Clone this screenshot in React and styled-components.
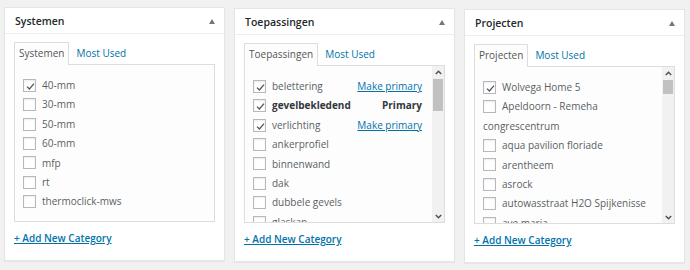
import React from "react";
import styled, { createGlobalStyle } from "styled-components";

const GlobalStyle = createGlobalStyle`
  html, body { margin: 0; padding: 0; background: #f1f1f1; }
  body { font-family: "Open Sans", "Noto Sans", sans-serif; color: #555; }
  * { box-sizing: border-box; }
`;

const Page = styled.div`
  display: flex;
  align-items: flex-start;
  gap: 9px;
  padding: 7px 4px;
  width: 690px;
  height: 270px;
`;

const Panel = styled.section`
  width: 221px;
  margin-top: ${(p) => p.$shift || 0}px;
  background: #fff;
  border: 1px solid #e5e5e5;
  box-shadow: 0 1px 1px rgba(0, 0, 0, 0.04);
`;

const PanelHeader = styled.div`
  height: 26px;
  display: flex;
  align-items: center;
  justify-content: space-between;
  padding: 0 9px 0 10px;
  border-bottom: 1px solid #eee;
`;

const Title = styled.h2`
  margin: 0;
  font-size: 10.5px;
  font-weight: 600;
  color: #23282d;
  line-height: 14px;
`;

const Toggle = styled.span`
  width: 0;
  height: 0;
  border-left: 3.5px solid transparent;
  border-right: 3.5px solid transparent;
  border-bottom: 5px solid #72777c;
  margin-top: 1px;
`;

const PanelBody = styled.div`
  padding: 8px 9px 15px 9px;
`;

const Tabs = styled.div`
  display: flex;
  align-items: flex-end;
  position: relative;
  z-index: 1;
  margin-bottom: -1px;
`;

const Tab = styled.span`
  font-size: 10px;
  line-height: 15px;
  padding: 3px ${(p) => (p.$active ? "4px" : "6px")} 4px;
  color: ${(p) => (p.$active ? "#555" : "#0073aa")};
  background: ${(p) => (p.$active ? "#fdfdfd" : "transparent")};
  border: 1px solid ${(p) => (p.$active ? "#ddd" : "transparent")};
  border-bottom: none;
`;

const TabBox = styled.div`
  height: 158px;
  border: 1px solid #ddd;
  background: #fdfdfd;
  display: flex;
  overflow: hidden;
`;

const List = styled.div`
  flex: 1;
  overflow: hidden;
  padding: 11px 10px 0 8px;
`;

const Row = styled.div`
  font-size: 10px;
  line-height: 19.4px;
  color: #5a5f64;
  font-weight: ${(p) => (p.$bold ? 700 : 400)};
  ${(p) => (p.$bold ? "color: #32373c;" : "")}
`;

const Box = styled.span`
  display: inline-block;
  width: 13px;
  height: 13px;
  border: 1px solid #b4b9be;
  background: #fff;
  vertical-align: middle;
  margin: -2px 6px 0 0;
  box-shadow: inset 0 1px 2px rgba(0, 0, 0, 0.08);
  position: relative;

  svg {
    position: absolute;
    left: 1px;
    top: 1px;
  }
`;

const MakePrimary = styled.a`
  float: right;
  color: #0073aa;
  text-decoration: underline;
  font-weight: 400;
`;

const PrimaryLabel = styled.span`
  float: right;
  font-weight: 700;
  color: #32373c;
`;

const Scrollbar = styled.div`
  width: 12px;
  flex: none;
  background: #f1f1f1;
  display: flex;
  flex-direction: column;
  align-items: center;
`;

const ScrollButton = styled.div`
  height: 12px;
  width: 12px;
  display: flex;
  align-items: center;
  justify-content: center;
`;

const Track = styled.div`
  flex: 1;
  width: 100%;
  padding: 1px 1px 0;
`;

const Thumb = styled.div`
  width: 100%;
  background: #c1c1c1;
`;

const AddLink = styled.a`
  display: block;
  margin-top: 9px;
  font-size: 10px;
  line-height: 14px;
  font-weight: 600;
  color: #0073aa;
  text-decoration: underline;
`;

const Check = () => (
  <svg width="11" height="11" viewBox="0 0 11 11">
    <path d="M2 5.6 L4.4 8 L9 2.6" fill="none" stroke="#555" strokeWidth="1.3" />
  </svg>
);

const Chevron = ({ down }) => (
  <svg width="7" height="5" viewBox="0 0 7 5">
    <path
      d={down ? "M0.8 1 L3.5 3.8 L6.2 1" : "M0.8 4 L3.5 1.2 L6.2 4"}
      fill="none"
      stroke="#505050"
      strokeWidth="1.4"
    />
  </svg>
);

const Item = ({ label, checked, bold, action }) => (
  <Row $bold={bold}>
    {action === "make" && <MakePrimary>Make primary</MakePrimary>}
    {action === "primary" && <PrimaryLabel>Primary</PrimaryLabel>}
    <Box>{checked && <Check />}</Box>
    {label}
  </Row>
);

const FakeScroll = ({ thumb }) => (
  <Scrollbar>
    <ScrollButton>
      <Chevron />
    </ScrollButton>
    <Track>
      <Thumb style={{ height: thumb }} />
    </Track>
    <ScrollButton>
      <Chevron down />
    </ScrollButton>
  </Scrollbar>
);

const CategoryPanel = ({ title, items, thumb, shift }) => (
  <Panel $shift={shift}>
    <PanelHeader>
      <Title>{title}</Title>
      <Toggle />
    </PanelHeader>
    <PanelBody>
      <Tabs>
        <Tab $active>{title}</Tab>
        <Tab>Most Used</Tab>
      </Tabs>
      <TabBox>
        <List>
          {items.map((it) => (
            <Item key={it.label} {...it} />
          ))}
        </List>
        {thumb && <FakeScroll thumb={thumb} />}
      </TabBox>
      <AddLink>+ Add New Category</AddLink>
    </PanelBody>
  </Panel>
);

const systemen = [
  { label: "40-mm", checked: true },
  { label: "30-mm" },
  { label: "50-mm" },
  { label: "60-mm" },
  { label: "mfp" },
  { label: "rt" },
  { label: "thermoclick-mws" },
];

const toepassingen = [
  { label: "belettering", checked: true, action: "make" },
  { label: "gevelbekledend", checked: true, bold: true, action: "primary" },
  { label: "verlichting", checked: true, action: "make" },
  { label: "ankerprofiel" },
  { label: "binnenwand" },
  { label: "dak" },
  { label: "dubbele gevels" },
  { label: "glaskap" },
];

const projecten = [
  { label: "Wolvega Home 5", checked: true },
  { label: "Apeldoorn - Remeha congrescentrum" },
  { label: "aqua pavilion floriade" },
  { label: "arentheem" },
  { label: "asrock" },
  { label: "autowasstraat H2O Spijkenisse" },
  { label: "ave maria" },
];

export default function App() {
  return (
    <>
      <GlobalStyle />
      <Page>
        <CategoryPanel title="Systemen" items={systemen} shift={0} />
        <CategoryPanel title="Toepassingen" items={toepassingen} thumb={32} shift={1} />
        <CategoryPanel title="Projecten" items={projecten} thumb={14} shift={2} />
      </Page>
    </>
  );
}
